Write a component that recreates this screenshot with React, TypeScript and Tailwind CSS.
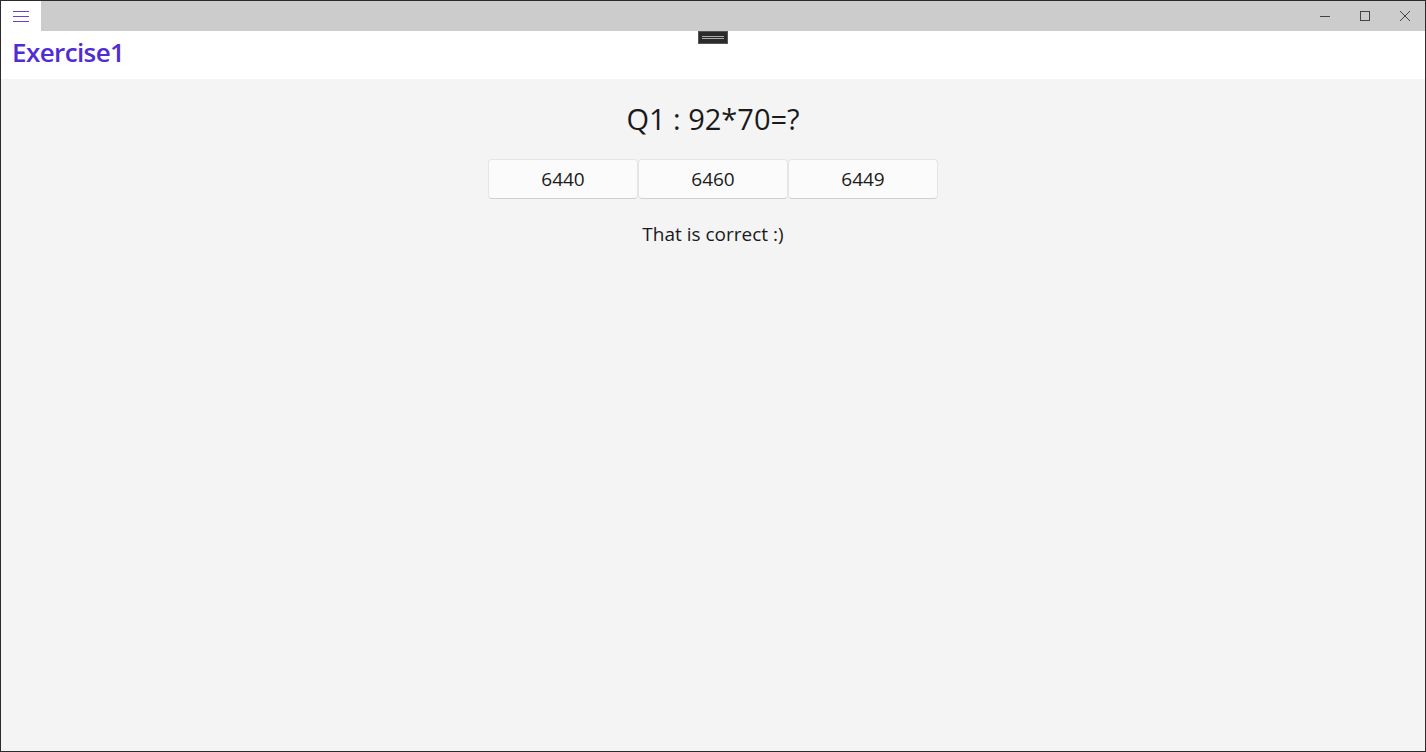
import React from "react";

const answers = ["6440", "6460", "6449"];

const App = () => {
  return (
    <div
      className="w-[1426px] h-[752px] flex flex-col border border-[#2b2b2b] bg-[#f4f4f4] overflow-hidden"
      style={{ fontFamily: '"Open Sans", "Noto Sans", sans-serif' }}
    >
      {/* title bar */}
      <div className="h-[30px] flex items-stretch bg-[#cccccc] shrink-0">
        <div className="w-[40px] bg-white flex flex-col items-center justify-center gap-[4px]">
          <div className="w-[16px] h-[1px] bg-[#6b3fdb]" />
          <div className="w-[16px] h-[1px] bg-[#6b3fdb]" />
          <div className="w-[16px] h-[1px] bg-[#6b3fdb]" />
        </div>
        <div className="flex-1" />
        <div className="flex items-center text-[#333]">
          <div className="w-[40px] flex justify-center">
            <svg width="10" height="10" viewBox="0 0 10 10">
              <path d="M0 5.5h10" stroke="#444" strokeWidth="1" />
            </svg>
          </div>
          <div className="w-[40px] flex justify-center">
            <svg width="10" height="10" viewBox="0 0 10 10">
              <rect x="0.5" y="0.5" width="9" height="9" fill="none" stroke="#444" strokeWidth="1" />
            </svg>
          </div>
          <div className="w-[40px] flex justify-center">
            <svg width="10" height="10" viewBox="0 0 10 10">
              <path d="M0 0L10 10M10 0L0 10" stroke="#444" strokeWidth="1" />
            </svg>
          </div>
        </div>
      </div>

      {/* header */}
      <div className="relative h-[48px] bg-white flex items-start pt-[5px] px-[11px] shrink-0">
        <span className="text-[26px] font-semibold text-[#512bd4] tracking-[-0.6px] leading-[32px]">
          Exercise1
        </span>
        <div className="absolute left-[697px] top-0 w-[30px] h-[13px] bg-[#2b2b2b] border border-[#555] flex flex-col items-center justify-center gap-[1px]">
          <div className="w-[22px] h-[1px] bg-[#aaa]" />
          <div className="w-[22px] h-[1px] bg-[#aaa]" />
        </div>
      </div>

      {/* content */}
      <div className="flex-1 flex flex-col items-center pt-[21px] text-[#1a1a1a]">
        <h1 className="text-[29px] leading-[38px]">Q1 : 92*70=?</h1>
        <div className="mt-[21px] flex">
          {answers.map((a) => (
            <button
              key={a}
              className="w-[150px] h-[40px] rounded-[4px] bg-[#fbfbfb] border border-[#e5e5e5] border-b-[#cfcfcf] text-[19px] text-[#1a1a1a]"
            >
              {a}
            </button>
          ))}
        </div>
        <p className="mt-[21px] text-[19px] leading-[28px]">That is correct :)</p>
      </div>
    </div>
  );
};

export default App;
